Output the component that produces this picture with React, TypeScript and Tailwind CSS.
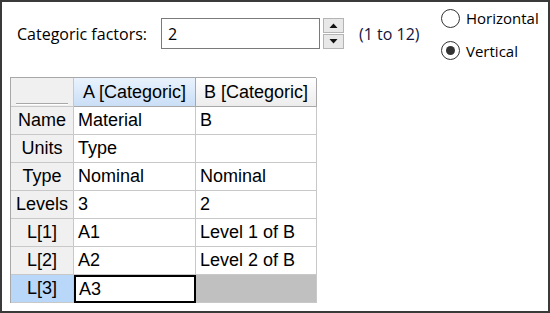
import { ReactNode } from "react";

const uiFont = { fontFamily: '"Segoe UI", "Open Sans", sans-serif' };
const gridFont = { fontFamily: '"Liberation Sans", Arial, sans-serif' };

const rows = [
    { label: "Name", a: "Material", b: "B" },
    { label: "Units", a: "Type", b: "" },
    { label: "Type", a: "Nominal", b: "Nominal" },
    { label: "Levels", a: "3", b: "2" },
    { label: "L[1]", a: "A1", b: "Level 1 of B" },
    { label: "L[2]", a: "A2", b: "Level 2 of B" },
];

function RowHeader({
    children,
    active = false,
}: {
    children?: ReactNode;
    active?: boolean;
}) {
    return (
        <div
            className={`flex flex-col border-r border-b border-[#c8c8c8] ${
                active ? "bg-[#b9d7f8]" : "bg-[#f0f0f0]"
            }`}
        >
            <div className="flex flex-1 items-center justify-center">
                {children}
            </div>
            {!active && (
                <>
                    <div className="mx-[5px] h-px bg-[#a8a8a8]" />
                    <div className="mx-[5px] mb-px h-px bg-white" />
                </>
            )}
        </div>
    );
}

function Radio({ label, checked }: { label: string; checked?: boolean }) {
    return (
        <div className="flex items-center gap-[6px]">
            <span className="flex size-[19px] items-center justify-center rounded-full border-[1.5px] border-[#333] bg-white">
                {checked && (
                    <span className="size-[9px] rounded-full bg-[#333]" />
                )}
            </span>
            <span className="text-[15px] text-black">{label}</span>
        </div>
    );
}

export default function App() {
    return (
        <div
            className="flex h-[313px] w-[550px] flex-col border-2 border-[#3a3a3a] bg-white"
            style={uiFont}
        >
            <div className="flex h-[75px] items-start">
                <div className="mt-[16px] flex items-center pl-[15px]">
                    <span className="w-[144px] text-[16px] text-black">
                        Categoric factors:
                    </span>
                    <div className="flex h-[31px] w-[159px] items-center border border-[#7a7a7a] bg-white pl-[6px] text-[16px]">
                        2
                    </div>
                    <div className="ml-[3px] flex h-[31px] w-[21px] flex-col gap-px">
                        <div className="flex flex-1 items-center justify-center border border-[#b4b4b4] bg-[#e8e8e8]">
                            <svg width="9" height="5" viewBox="0 0 9 5">
                                <path d="M0.5 5 L4.5 0.5 L8.5 5 Z" fill="#111" />
                            </svg>
                        </div>
                        <div className="flex flex-1 items-center justify-center border border-[#b4b4b4] bg-[#e8e8e8]">
                            <svg width="9" height="5" viewBox="0 0 9 5">
                                <path d="M0.5 0 L4.5 4.5 L8.5 0 Z" fill="#111" />
                            </svg>
                        </div>
                    </div>
                    <span className="ml-[15px] text-[16px] text-[#14143c]">
                        (1 to 12)
                    </span>
                </div>
                <div className="ml-auto flex w-[107px] flex-col gap-[10px] pt-[5px]">
                    <Radio label="Horizontal" />
                    <Radio label="Vertical" checked />
                </div>
            </div>

            <div className="ml-[8px] w-[306px] border-t border-l border-[#a8a8a8]" style={gridFont}>
                <div className="grid grid-cols-[63px_122px_121px] grid-rows-[29px_repeat(7,28px)] text-[18px] text-black">
                    <RowHeader />
                    <div className="flex items-center justify-center border-r border-b border-[#a8a8a8] bg-gradient-to-b from-[#eaf3fd] to-[#c9def6]">
                        A [Categoric]
                    </div>
                    <div className="flex items-center justify-center border-r border-b border-[#a8a8a8] bg-gradient-to-b from-white to-[#ececec]">
                        B [Categoric]
                    </div>

                    {rows.map((r) => (
                        <div key={r.label} className="contents">
                            <RowHeader>{r.label}</RowHeader>
                            <div className="flex items-center border-r border-b border-[#c8c8c8] bg-white pl-[4px]">
                                {r.a}
                            </div>
                            <div className="flex items-center border-r border-b border-[#c8c8c8] bg-white pl-[4px]">
                                {r.b}
                            </div>
                        </div>
                    ))}

                    <RowHeader active>L[3]</RowHeader>
                    <div className="flex items-center border-2 border-black bg-white pl-[3px]">
                        A3
                    </div>
                    <div className="border-r border-b border-[#c8c8c8] bg-[#c0c0c0]" />
                </div>
            </div>
        </div>
    );
}
